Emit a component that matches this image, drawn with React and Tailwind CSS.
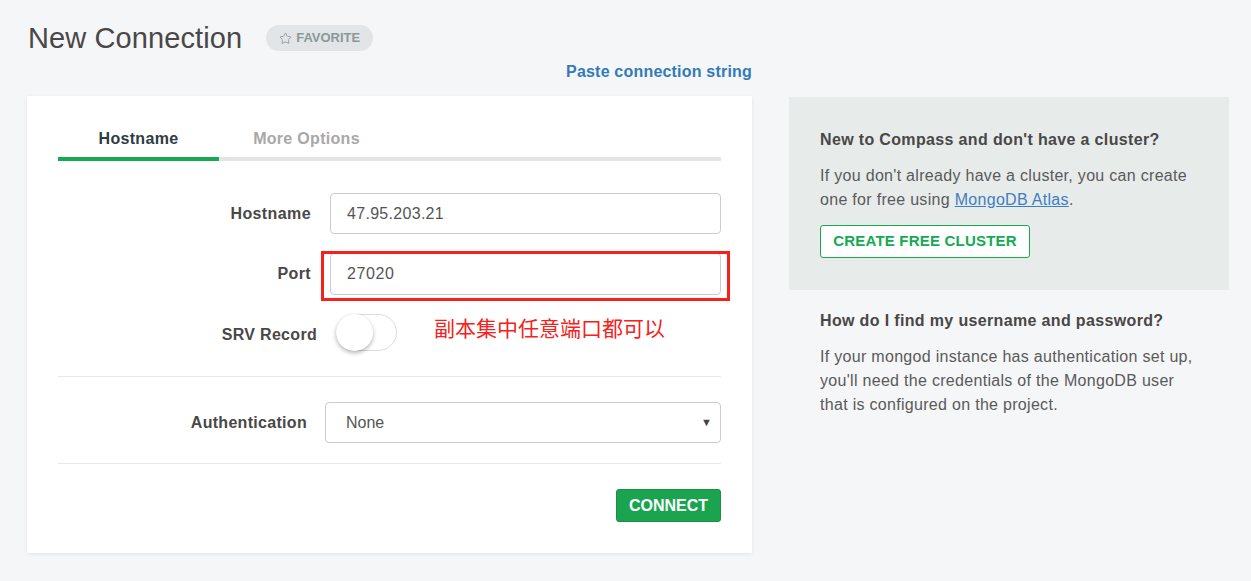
import { Star } from "lucide-react";

function Field({ label, labelW, gap, children }) {
  return (
    <div className="flex items-center">
      <div
        className="shrink-0 text-right text-[16px] font-bold tracking-[0.4px] text-[#494747]"
        style={{ width: labelW, marginRight: gap }}
      >
        {label}
      </div>
      <div className="flex-1">{children}</div>
    </div>
  );
}

export default function App() {
  return (
    <div className="min-h-screen w-full bg-[#f5f6f7] font-['Liberation_Sans',Arial,sans-serif] text-[#494747]">
      <div className="flex px-[27px] pt-[20px]">
        {/* left column */}
        <div className="w-[725px] shrink-0">
          <div className="flex h-[36px] items-center">
            <h1 className="pl-[1px] text-[29px] font-normal leading-none tracking-[0.1px] text-[#494747]">
              New Connection
            </h1>
            <div className="ml-[24px] flex h-[26px] w-[107px] items-center justify-center gap-[4px] rounded-full bg-[#e2e5e7] text-[13px] font-bold text-[#8c9898]">
              <Star size={13} strokeWidth={1.6} />
              <span>FAVORITE</span>
            </div>
          </div>

          <div className="mt-[6px] flex h-[20px] items-center justify-end">
            <a className="text-[16px] font-bold tracking-[0.2px] text-[#337ab7]">Paste connection string</a>
          </div>

          <div className="mt-[14px] bg-white px-[31px] pt-[24px] pb-[31px] shadow-[0_1px_4px_rgba(0,0,0,0.08)]">
            {/* tabs */}
            <div className="flex h-[37px] items-center">
              <div className="w-[161px] text-center text-[16px] font-bold tracking-[0.3px] text-[#2f3b45]">Hostname</div>
              <div className="w-[175px] text-center text-[16px] font-bold tracking-[0.3px] text-[#a8a8a8]">More Options</div>
            </div>
            <div className="flex h-[4px] bg-[#e4e4e4]">
              <div className="w-[161px] bg-[#13aa52]" />
            </div>

            <div className="mt-[32px] flex flex-col">
              <Field label="Hostname" labelW={253} gap={19}>
                <div className="flex h-[41px] items-center rounded-[4px] border border-[#ccc] px-[16px] text-[16px] tracking-[0.3px] text-[#555]">
                  47.95.203.21
                </div>
              </Field>

              <div className="mt-[19px]">
                <Field label="Port" labelW={253} gap={19}>
                  <div className="relative">
                    <div className="flex h-[42px] items-center rounded-[4px] border border-[#ccc] px-[16px] text-[16px] tracking-[0.6px] text-[#555]">
                      27020
                    </div>
                    <div className="pointer-events-none absolute -top-[2px] -right-[9px] -bottom-[6px] -left-[9px] border-[3px] border-[#f5211a]" />
                  </div>
                </Field>
              </div>

              <div className="mt-[19px] flex items-center">
                <div className="mt-[5px] w-[259px] shrink-0 text-right text-[16px] font-bold tracking-[0.3px] text-[#494747]">SRV Record</div>
                <div className="ml-[19px] flex h-[37px] w-[61px] items-center rounded-full border border-[#dcdcdc] bg-white">
                  <div className="-ml-px h-[37px] w-[37px] rounded-full bg-white shadow-[0_2px_4px_rgba(0,0,0,0.3)]" />
                </div>
                <div className="ml-[37px] -mt-[10px] font-['Noto_Sans_CJK_SC',sans-serif] text-[21px] text-[#f5211a]">
                  副本集中任意端口都可以
                </div>
              </div>

              <div className="mt-[25px] h-px bg-[#e9e9e9]" />

              <div className="mt-[25px] flex items-center">
                <div className="w-[249px] shrink-0 text-right text-[16px] font-bold tracking-[0.3px] text-[#494747]">Authentication</div>
                <div className="ml-[18px] flex h-[41px] flex-1 items-center justify-between rounded-[4px] border border-[#ccc] pl-[20px] pr-[8px] text-[16px] text-[#555]">
                  <span>None</span>
                  <span className="text-[11px] text-[#444]">▼</span>
                </div>
              </div>

              <div className="mt-[20px] h-px bg-[#e9e9e9]" />

              <div className="mt-[25px] flex justify-end">
                <button className="h-[33px] w-[105px] rounded-[3px] border border-[#17903f] bg-[#1ba44f] text-[16px] font-bold text-white">
                  CONNECT
                </button>
              </div>
            </div>
          </div>
        </div>

        {/* right column */}
        <div className="ml-[37px] w-[440px] shrink-0 pt-[77px]">
          <div className="bg-[#e7eceb] px-[31px] pt-[31px] pb-[32px]">
            <h2 className="text-[16px] font-bold leading-[24px] tracking-[0.35px] text-[#494747]">
              New to Compass and don&apos;t have a cluster?
            </h2>
            <p className="mt-[12px] text-[16px] leading-[24px] tracking-[0.3px] text-[#5a5a5a]">
              If you don&apos;t already have a cluster, you can create one for free using{" "}
              <a className="text-[#3d7fc1] underline">MongoDB Atlas</a>.
            </p>
            <button className="mt-[13px] h-[33px] w-[210px] rounded-[3px] border border-[#13aa52] bg-white text-[15px] font-bold tracking-[0.2px] text-[#13aa52]">
              CREATE FREE CLUSTER
            </button>
          </div>

          <div className="px-[31px] pt-[19px]">
            <h2 className="text-[16px] font-bold leading-[24px] tracking-[0.35px] text-[#494747]">
              How do I find my username and password?
            </h2>
            <p className="mt-[12px] text-[16px] leading-[24px] tracking-[0.3px] text-[#5a5a5a]">
              If your mongod instance has authentication set up, you&apos;ll need the credentials of the MongoDB user
              that is configured on the project.
            </p>
          </div>
        </div>
      </div>
    </div>
  );
}
